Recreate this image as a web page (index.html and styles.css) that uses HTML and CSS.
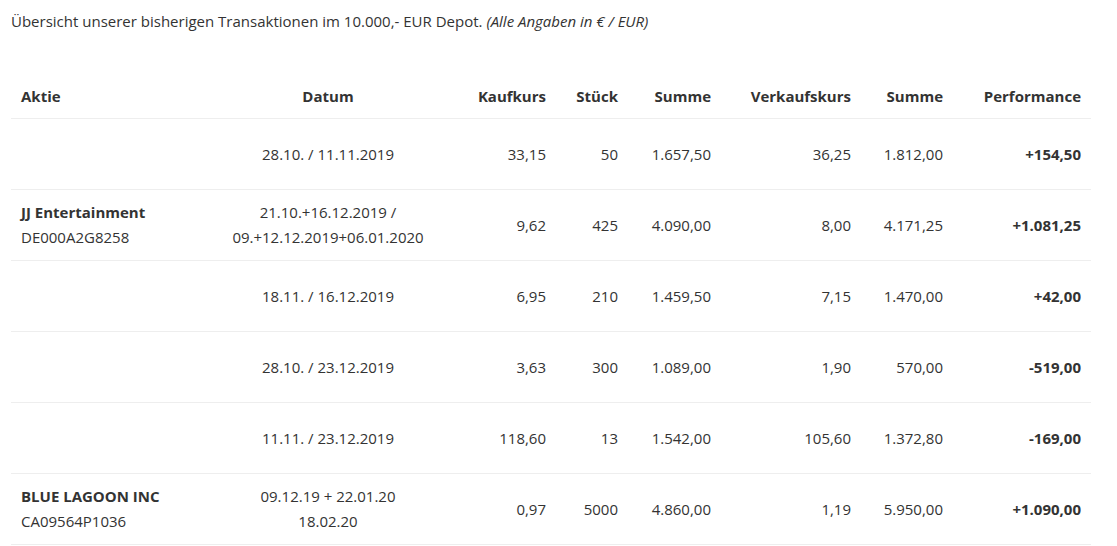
FILE: index.html
```html
<!DOCTYPE html>
<html lang="de">
<head>
<meta charset="utf-8">
<title>Transaktionen</title>
<link rel="stylesheet" href="styles.css">
</head>
<body>
<div class="page">
  <p class="intro">Übersicht unserer bisherigen Transaktionen im 10.000,- EUR Depot. <em>(Alle Angaben in € / EUR)</em></p>
  <table class="tx">
    <colgroup>
      <col class="c-aktie"><col class="c-datum"><col class="c-kk"><col class="c-st"><col class="c-s1"><col class="c-vk"><col class="c-s2"><col class="c-perf">
    </colgroup>
    <thead>
      <tr>
        <th class="l">Aktie</th>
        <th class="c">Datum</th>
        <th class="r">Kaufkurs</th>
        <th class="r">Stück</th>
        <th class="r">Summe</th>
        <th class="r">Verkaufskurs</th>
        <th class="r">Summe</th>
        <th class="r">Performance</th>
      </tr>
    </thead>
    <tbody>
      <tr>
        <td class="l"></td>
        <td class="c">28.10. / 11.11.2019</td>
        <td class="r">33,15</td>
        <td class="r">50</td>
        <td class="r">1.657,50</td>
        <td class="r">36,25</td>
        <td class="r">1.812,00</td>
        <td class="r b">+154,50</td>
      </tr>
      <tr>
        <td class="l"><strong>JJ Entertainment</strong><br>DE000A2G8258</td>
        <td class="c">21.10.+16.12.2019 /<br>09.+12.12.2019+06.01.2020</td>
        <td class="r">9,62</td>
        <td class="r">425</td>
        <td class="r">4.090,00</td>
        <td class="r">8,00</td>
        <td class="r">4.171,25</td>
        <td class="r b">+1.081,25</td>
      </tr>
      <tr>
        <td class="l"></td>
        <td class="c">18.11. / 16.12.2019</td>
        <td class="r">6,95</td>
        <td class="r">210</td>
        <td class="r">1.459,50</td>
        <td class="r">7,15</td>
        <td class="r">1.470,00</td>
        <td class="r b">+42,00</td>
      </tr>
      <tr>
        <td class="l"></td>
        <td class="c">28.10. / 23.12.2019</td>
        <td class="r">3,63</td>
        <td class="r">300</td>
        <td class="r">1.089,00</td>
        <td class="r">1,90</td>
        <td class="r">570,00</td>
        <td class="r b">-519,00</td>
      </tr>
      <tr>
        <td class="l"></td>
        <td class="c">11.11. / 23.12.2019</td>
        <td class="r">118,60</td>
        <td class="r">13</td>
        <td class="r">1.542,00</td>
        <td class="r">105,60</td>
        <td class="r">1.372,80</td>
        <td class="r b">-169,00</td>
      </tr>
      <tr>
        <td class="l"><strong>BLUE LAGOON INC</strong><br>CA09564P1036</td>
        <td class="c">09.12.19 + 22.01.20<br>18.02.20</td>
        <td class="r">0,97</td>
        <td class="r">5000</td>
        <td class="r">4.860,00</td>
        <td class="r">1,19</td>
        <td class="r">5.950,00</td>
        <td class="r b">+1.090,00</td>
      </tr>
    </tbody>
  </table>
</div>
</body>
</html>
```
FILE: styles.css
```css
html, body {
  margin: 0;
  padding: 0;
  background: #fff;
}
body {
  font-family: "Open Sans", "Liberation Sans", sans-serif;
  font-size: 15px;
  line-height: 25px;
  color: #333;
}
.page {
  padding: 9px 11px 0 11px;
}
.intro {
  margin: 0 0 40px 0;
}
.intro em {
  font-style: italic;
}
.tx {
  width: 1080px;
  border-collapse: collapse;
  table-layout: fixed;
}
.c-aktie { width: 209px; }
.c-datum { width: 216px; }
.c-kk { width: 120px; }
.c-st { width: 72px; }
.c-s1 { width: 93px; }
.c-vk { width: 140px; }
.c-s2 { width: 92px; }
.c-perf { width: 138px; }
.tx th {
  font-weight: 700;
  padding: 10px 10px 9px 10px;
  height: 24px;
  border-bottom: 1px solid #eee;
  vertical-align: middle;
}
.tx td {
  padding: 0 10px;
  height: 70px;
  border-bottom: 1px solid #eee;
  vertical-align: middle;
}
.tx td strong {
  font-weight: 700;
}
.l { text-align: left; }
.c { text-align: center; }
.r { text-align: right; }
.b { font-weight: 700; }
```
